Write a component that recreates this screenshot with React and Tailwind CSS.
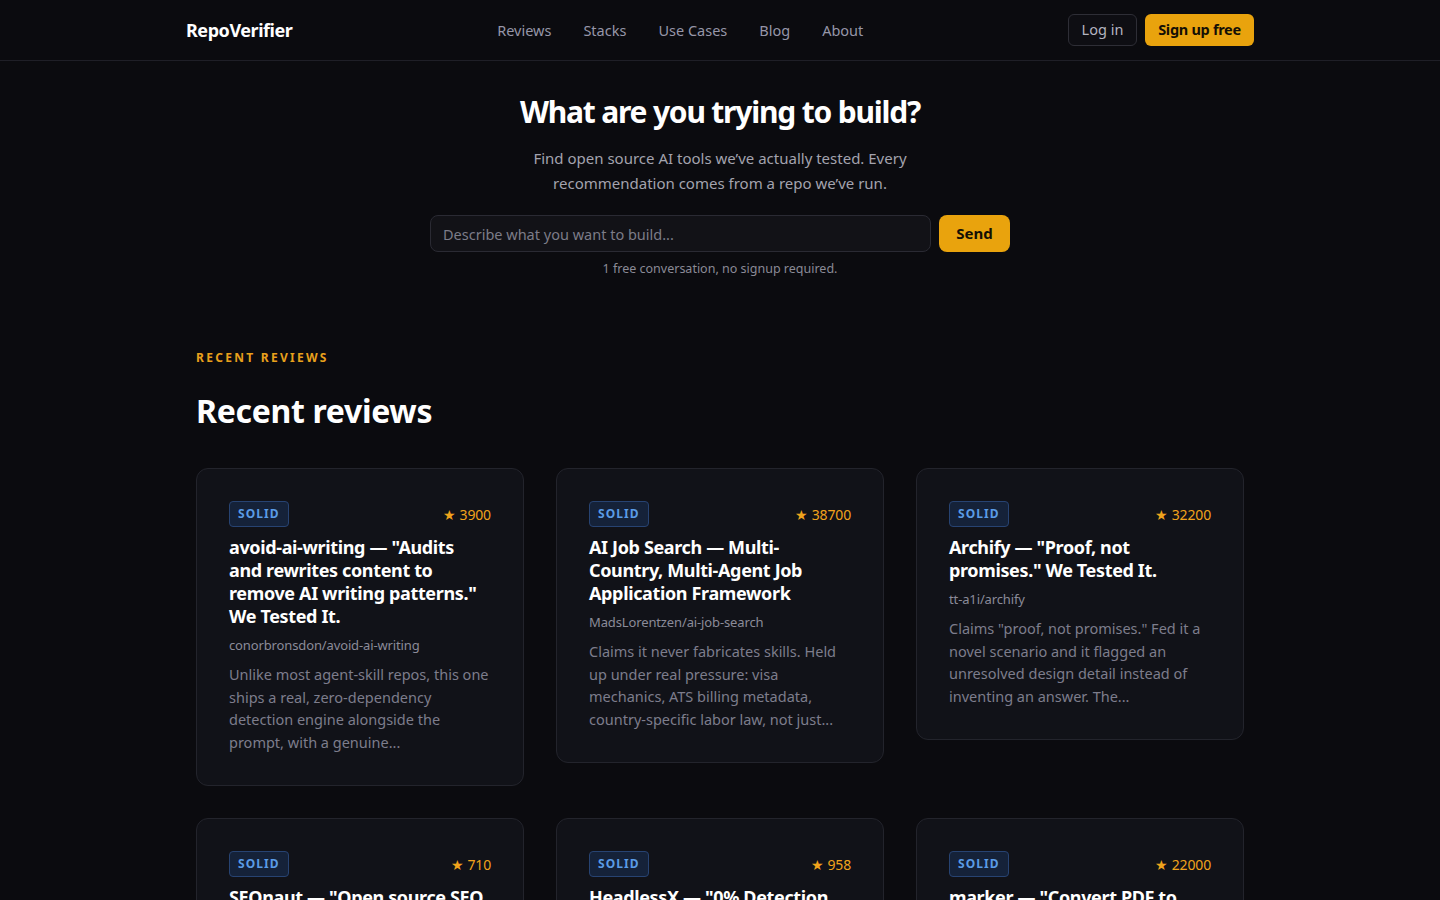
import React from "react";

const reviews = [
  {
    stars: "3900",
    title: 'avoid-ai-writing — "Audits and rewrites content to remove AI writing patterns." We Tested It.',
    repo: "conorbronsdon/avoid-ai-writing",
    desc: "Unlike most agent-skill repos, this one ships a real, zero-dependency detection engine alongside the prompt, with a genuine...",
  },
  {
    stars: "38700",
    title: "AI Job Search — Multi-Country, Multi-Agent Job Application Framework",
    repo: "MadsLorentzen/ai-job-search",
    desc: "Claims it never fabricates skills. Held up under real pressure: visa mechanics, ATS billing metadata, country-specific labor law, not just...",
  },
  {
    stars: "32200",
    title: 'Archify — "Proof, not promises." We Tested It.',
    repo: "tt-a1i/archify",
    desc: 'Claims "proof, not promises." Fed it a novel scenario and it flagged an unresolved design detail instead of inventing an answer. The...',
  },
  {
    stars: "710",
    title: 'SEOnaut — "Open source SEO auditing tool." We Tested It.',
    repo: "StJudeWasHere/seonaut",
    desc: "Crawls a site and reports broken links, missing metadata and redirect chains. We ran it against a real site and...",
  },
  {
    stars: "958",
    title: 'HeadlessX — "0% Detection Rate" browser automation. We Tested It.',
    repo: "saifyxpro/HeadlessX",
    desc: "Claims undetectable browsing. We pointed it at common bot checks to see how the fingerprinting actually holds...",
  },
  {
    stars: "22000",
    title: 'marker — "Convert PDF to markdown quickly with high accuracy." We Tested It.',
    repo: "datalab-to/marker",
    desc: "Fed it scanned papers, tables and equations. The output was cleaner than expected, though layout edge cases...",
  },
];

function Card({ r }) {
  return (
    <div className="rounded-xl border border-[#23242c] bg-[#111218] p-8">
      <div className="flex items-center justify-between">
        <span className="rounded-[4px] border border-[#274372] bg-[#152239] px-2 py-[3px] text-[12px] font-bold leading-[18px] tracking-[0.09em] text-[#5a9be6]">
          SOLID
        </span>
        <span className="text-[14px] tracking-[-0.01em] text-[#f0a31c]">★ {r.stars}</span>
      </div>
      <h3 className="mt-[9px] text-[18px] font-bold leading-[23px] tracking-[-0.02em] text-white">{r.title}</h3>
      <div className="mt-[8px] text-[13px] leading-[18px] tracking-[-0.01em] text-[#8b8b98]">{r.repo}</div>
      <p className="mt-[9px] text-[14.5px] leading-[22.5px] text-[#7d7d8c]">{r.desc}</p>
    </div>
  );
}

export default function App() {
  return (
    <div
      className="min-h-screen bg-[#0b0b0f] text-white"
      style={{ fontFamily: '"Noto Sans", "Open Sans", sans-serif' }}
    >
      <header className="border-b border-[#1f1f27]">
        <div className="mx-auto flex h-[60px] max-w-[1100px] items-center justify-between px-4">
          <div className="text-[18px] font-bold tracking-[-0.025em] text-white">RepoVerifier</div>
          <nav className="flex items-center gap-8 pt-[2px] text-[14.5px] text-[#9696a8]">
            <a>Reviews</a>
            <a>Stacks</a>
            <a>Use Cases</a>
            <a>Blog</a>
            <a>About</a>
          </nav>
          <div className="flex items-center gap-2">
            <button className="h-8 w-[69px] rounded-md border border-[#2e2e36] bg-[#0e0e13] text-[14.5px] text-[#b4b4c0]">
              Log in
            </button>
            <button className="h-8 w-[109px] rounded-md bg-[#e9a30d] text-[14.5px] font-bold tracking-[-0.02em] text-[#140f05]">
              Sign up free
            </button>
          </div>
        </div>
      </header>

      <section className="flex flex-col items-center pt-[30px] text-center">
        <h1 className="text-[30px] font-bold leading-[42px] tracking-[-0.04em] text-white">What are you trying to build?</h1>
        <p className="mt-[13px] max-w-[420px] text-[15px] leading-[25px] text-[#a3a3ae]">
          Find open source AI tools we’ve actually tested. Every recommendation comes from a repo we’ve run.
        </p>
        <div className="mt-[19px] flex w-[580px] gap-2">
          <input
            className="h-[37px] flex-1 rounded-lg border border-[#2a2a33] bg-[#121217] px-3 text-[14.5px] text-white outline-none placeholder:text-[#7c7c88]"
            placeholder="Describe what you want to build..."
          />
          <button className="h-[37px] w-[71px] rounded-lg bg-[#e9a30d] text-[15px] font-bold text-[#140f05]">
            Send
          </button>
        </div>
        <div className="mt-[8px] text-[12.5px] leading-[18px] text-[#8a8a96]">1 free conversation, no signup required.</div>
      </section>

      <section className="mx-auto max-w-[1080px] px-4 pt-[72px] pb-16">
        <div className="text-[12px] font-bold leading-[16px] tracking-[0.19em] text-[#e8a01c]">RECENT REVIEWS</div>
        <h2 className="mt-[25px] text-[32px] font-bold leading-[40px] tracking-[-0.01em] text-white">Recent reviews</h2>
        <div className="mt-[37px] grid grid-cols-3 items-start gap-8">
          {reviews.map((r, i) => (
            <Card key={i} r={r} />
          ))}
        </div>
      </section>
    </div>
  );
}
